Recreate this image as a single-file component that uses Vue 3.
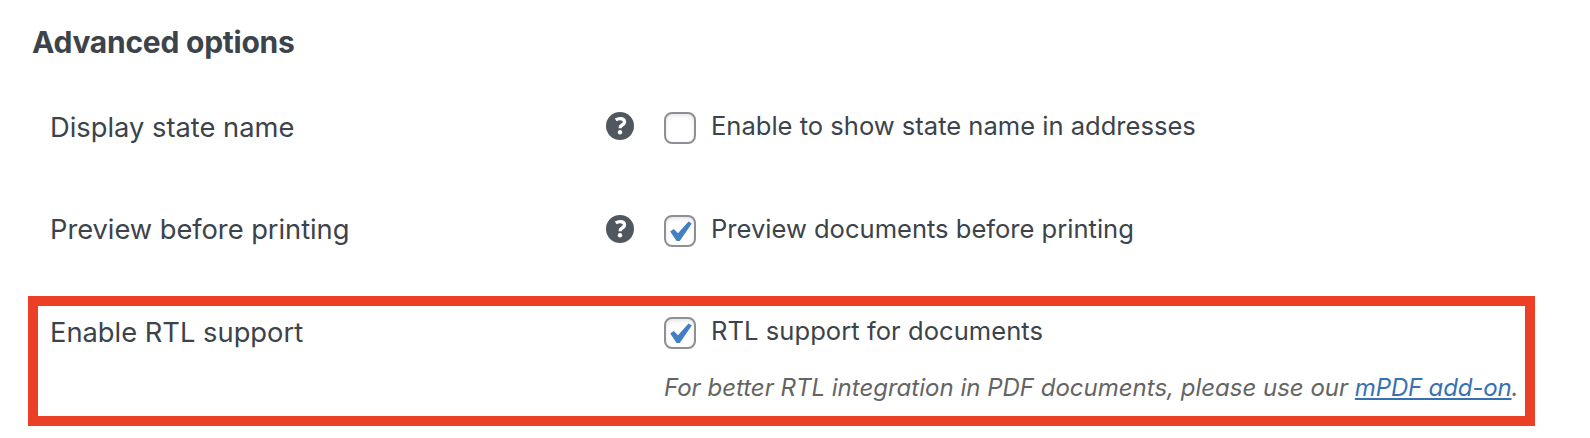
<script setup>
const rows = [
  { title: 'Display state name', label: 'Enable to show state name in addresses', checked: false, help: true, name: 'state' },
  { title: 'Preview before printing', label: 'Preview documents before printing', checked: true, help: true, name: 'preview' },
  { title: 'Enable RTL support', label: 'RTL support for documents', checked: true, help: false, name: 'rtl' },
]
</script>

<template>
  <main class="page">
    <h2 class="heading">Advanced options</h2>
    <section v-for="row in rows" :key="row.name" class="row" :class="row.name">
      <div class="title"><span>{{ row.title }}</span></div>
      <div class="help">
        <svg v-if="row.help" width="28" height="28" viewBox="0 0 28 28">
          <circle cx="14" cy="14" r="14" fill="#50575e" />
          <path d="M9.7 7.9C11.1 7 12.4 6.6 14.1 6.6C17 6.6 18.5 7.9 18.5 9.8C18.5 11.5 17.4 12.4 15.8 13.3C14.6 14 14.1 14.6 14.1 16.2" fill="none" stroke="#fff" stroke-width="3.3" />
          <circle cx="14" cy="20.3" r="2.2" fill="#fff" />
        </svg>
      </div>
      <div class="field">
        <div class="option">
          <span class="box">
            <svg v-if="row.checked" width="28" height="28" viewBox="0 0 28 28">
              <path d="M4.2 14.6L7.8 12.1L12 16.2L22.5 4.4L25.8 6.4L13.8 24H10.6Z" fill="#4380c3" />
            </svg>
          </span>
          <span class="label">{{ row.label }}</span>
        </div>
        <p v-if="row.name === 'rtl'" class="note"><span>For better RTL integration in PDF documents, please use our </span><a>mPDF add-on</a><span>.</span></p>
      </div>
    </section>
  </main>
</template>

<style>
html, body { background: #fff; }
</style>

<style scoped>
.page {
  box-sizing: border-box;
  width: 1590px;
  height: 438px;
  padding-top: 22px;
  overflow: hidden;
  background: #fff;
  color: #3c434a;
  font-family: Inter, "Liberation Sans", sans-serif;
}
.heading {
  margin: 0 0 45px 32px;
  height: 40px;
  font-size: 30px;
  line-height: 40px;
  font-weight: 700;
  letter-spacing: -0.25px;
}
.row {
  box-sizing: border-box;
  display: grid;
  grid-template-columns: 556px 58px 1fr;
  margin-left: 50px;
  height: 102px;
  white-space: nowrap;
}
.row.preview { height: 87px; }
.row.rtl {
  width: 1507px;
  height: 130px;
  margin-left: 28px;
  padding: 6px 0 0 12px;
  border: 10px solid #eb4026;
}
.title {
  padding-top: 1px;
  font-size: 27.3px;
  line-height: 40px;
}
.preview .title { letter-spacing: -0.04px; }
.help { padding-top: 5px; height: 28px; }
.preview .help { padding-top: 6px; }
.help svg { display: block; }
.field { min-width: 0; }
.option {
  display: flex;
  align-items: flex-start;
  height: 40px;
}
.box {
  box-sizing: border-box;
  width: 32px;
  height: 32px;
  margin-top: 5px;
  flex: none;
  border: 2px solid #8c8f94;
  border-radius: 8px;
  background: #fff;
  box-shadow: inset 0 2px 4px rgba(0, 0, 0, 0.1);
}
.preview .box { margin-top: 6px; }
.box svg { display: block; }
.label {
  margin: -1px 0 0 15px;
  font-size: 25.55px;
  line-height: 40px;
}
.preview .label { margin-top: 0; }
.rtl .label { letter-spacing: 0.05px; }
.note {
  margin: 16px 0 0;
  font-size: 24px;
  line-height: 40px;
  font-style: italic;
  color: #646464;
}
.note a {
  color: #3871b3;
  letter-spacing: -0.16px;
  text-decoration: underline;
  text-decoration-thickness: 2px;
  text-underline-offset: 2px;
}
</style>
